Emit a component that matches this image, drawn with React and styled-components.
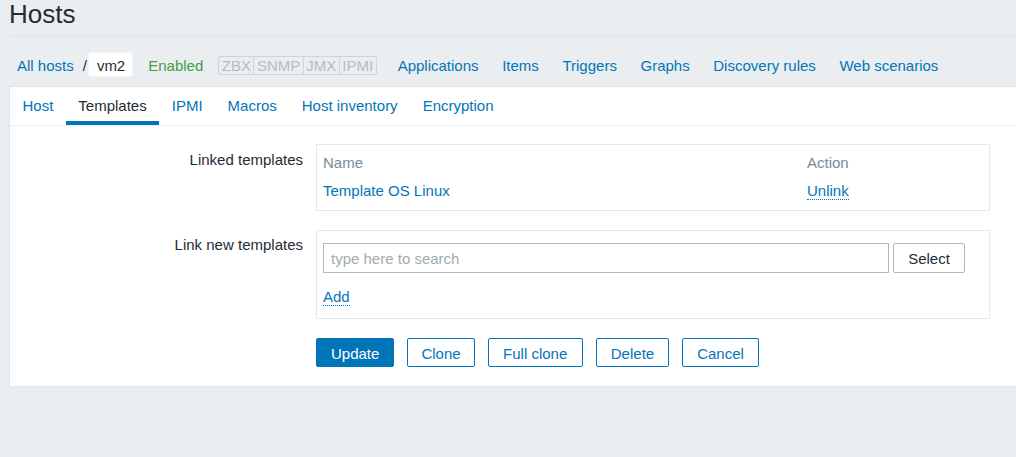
import React from "react";
import styled, { createGlobalStyle } from "styled-components";

const GlobalStyle = createGlobalStyle`
    html, body {
        margin: 0;
        padding: 0;
        background: #ebeef0;
        overflow: hidden;
    }
    body {
        font-family: "Liberation Sans", Arial, sans-serif;
        font-size: 15px;
        color: #1f2c33;
    }
`;

const Page = styled.div`
    width: 1030px;
    min-height: 457px;
`;

const Header = styled.header`
    margin-left: 9px;
    height: 36px;
    border-bottom: 1px solid #dfe4e7;
`;

const Title = styled.h1`
    margin: 0;
    font-size: 26px;
    font-weight: normal;
    line-height: 28px;
    color: #1f2c33;
`;

const NavRow = styled.nav`
    display: flex;
    align-items: center;
    height: 25px;
    padding: 15px 0 9px 17px;
    line-height: 25px;
`;

const NavLink = styled.a`
    color: #0275b8;
    text-decoration: none;
    white-space: nowrap;
    padding-top: 1px;
    margin-left: ${(p) => p.$ml || 0}px;
`;

const Slash = styled.span`
    margin: 0 1px 0 9px;
    padding-top: 1px;
    color: #1f2c33;
`;

const Current = styled.span`
    display: flex;
    align-items: center;
    height: 25px;
    box-sizing: border-box;
    padding: 1px 7px 0 8px;
    background: #fff;
    border: 1px solid #f3f5f6;
    border-radius: 2px;
`;

const Status = styled.span`
    color: #429e47;
    margin-left: 15px;
    padding-top: 1px;
`;

const Availability = styled.span`
    display: flex;
    margin-left: 15px;
    margin-top: 1px;
    height: 19px;
    box-sizing: border-box;
    border: 1px solid #ccd5d9;
    border-radius: 2px;
`;

const Interface = styled.span`
    display: flex;
    align-items: center;
    padding: 1px 2.5px 0;
    color: #b1bec5;
    line-height: 16px;
    & + & {
        border-left: 1px solid #ccd5d9;
    }
`;

const Panel = styled.section`
    margin-left: 9px;
    background: #fff;
    border: 1px solid #dfe4e7;
    padding-bottom: 19px;
`;

const Tabs = styled.ul`
    display: flex;
    list-style: none;
    margin: 0;
    padding: 0;
    height: 39px;
    box-sizing: border-box;
    border-bottom: 1px solid #ebeef0;
`;

const Tab = styled.li`
    display: flex;
    align-items: center;
    padding: 3px 12.5px 0;
    height: 38px;
    box-sizing: border-box;
    border-bottom: 4px solid ${(p) => (p.$active ? "#0275b8" : "transparent")};
    color: ${(p) => (p.$active ? "#1f2c33" : "#0275b8")};
    white-space: nowrap;
`;

const Form = styled.div`
    display: grid;
    grid-template-columns: 293px 674px;
    column-gap: 13px;
    row-gap: 19px;
    padding: 18px 0 0 0;
`;

const Label = styled.div`
    text-align: right;
    line-height: 20px;
    padding-top: ${(p) => p.$top || 6}px;
    white-space: nowrap;
`;

const Box = styled.div`
    border: 1px solid #e6e9eb;
    padding: ${(p) => p.$pad};
`;

const Table = styled.table`
    width: 100%;
    border-collapse: collapse;
    table-layout: fixed;
    & thead tr {
        height: 24px;
    }
    & tbody tr {
        height: 32px;
    }
    & th,
    & td {
        text-align: left;
        font-weight: normal;
        padding: 1px 0 0;
        vertical-align: middle;
    }
    & th {
        color: #768d99;
    }
`;

const LinkText = styled.a`
    color: #0275b8;
    text-decoration: none;
    border-bottom: ${(p) => (p.$dotted ? "1px dotted #0275b8" : "none")};
`;

const SearchRow = styled.div`
    display: flex;
    gap: 4px;
`;

const Input = styled.input`
    width: 566px;
    height: 30px;
    box-sizing: border-box;
    border: 1px solid #acbbc2;
    border-radius: 0;
    padding: 1px 7px 0;
    font-family: inherit;
    font-size: 15px;
    color: #1f2c33;
    &::placeholder {
        color: #a1acb2;
    }
`;

const SelectButton = styled.button`
    width: 72px;
    height: 30px;
    box-sizing: border-box;
    background: #fff;
    border: 1px solid #acbbc2;
    border-radius: 2px;
    font-family: inherit;
    font-size: 15px;
    color: #1f2c33;
    padding: 1px 0 0;
`;

const AddRow = styled.div`
    margin-top: 14px;
    line-height: 20px;
`;

const Buttons = styled.div`
    grid-column: 2;
    display: flex;
    gap: 13px;
`;

const Button = styled.button`
    height: 29px;
    box-sizing: border-box;
    padding: 1px ${(p) => p.$px || 13}px 0;
    border: 1px solid #0275b8;
    border-radius: 2px;
    background: ${(p) => (p.$primary ? "#0275b8" : "#fff")};
    color: ${(p) => (p.$primary ? "#fff" : "#0275b8")};
    font-family: inherit;
    font-size: 15px;
`;

const navItems = ["Applications", "Items", "Triggers", "Graphs", "Discovery rules", "Web scenarios"];
const tabs = ["Host", "Templates", "IPMI", "Macros", "Host inventory", "Encryption"];
const actions = [
    { label: "Update", primary: true, px: 14 },
    { label: "Clone", px: 13 },
    { label: "Full clone", px: 14.5 },
    { label: "Delete", px: 14 },
    { label: "Cancel", px: 14 }
];

const App = () => {
    return (
        <Page>
            <GlobalStyle />
            <Header>
                <Title>Hosts</Title>
            </Header>
            <NavRow>
                <NavLink>All hosts</NavLink>
                <Slash>/</Slash>
                <Current>vm2</Current>
                <Status>Enabled</Status>
                <Availability>
                    <Interface>ZBX</Interface>
                    <Interface>SNMP</Interface>
                    <Interface>JMX</Interface>
                    <Interface>IPMI</Interface>
                </Availability>
                {navItems.map((item, i) => (
                    <NavLink key={item} $ml={i === 0 ? 21 : 23.6}>
                        {item}
                    </NavLink>
                ))}
            </NavRow>
            <Panel>
                <Tabs>
                    {tabs.map((tab) => (
                        <Tab key={tab} $active={tab === "Templates"}>
                            {tab}
                        </Tab>
                    ))}
                </Tabs>
                <Form>
                    <Label>Linked templates</Label>
                    <Box $pad="5px 6px 4px">
                        <Table>
                            <colgroup>
                                <col style={{ width: 484 }} />
                                <col />
                            </colgroup>
                            <thead>
                                <tr>
                                    <th>Name</th>
                                    <th>Action</th>
                                </tr>
                            </thead>
                            <tbody>
                                <tr>
                                    <td>
                                        <LinkText>Template OS Linux</LinkText>
                                    </td>
                                    <td>
                                        <LinkText $dotted>Unlink</LinkText>
                                    </td>
                                </tr>
                            </tbody>
                        </Table>
                    </Box>
                    <Label $top={5}>Link new templates</Label>
                    <Box $pad="12px 6px 11px">
                        <SearchRow>
                            <Input placeholder="type here to search" />
                            <SelectButton>Select</SelectButton>
                        </SearchRow>
                        <AddRow>
                            <LinkText $dotted>Add</LinkText>
                        </AddRow>
                    </Box>
                    <Buttons>
                        {actions.map((a) => (
                            <Button key={a.label} $primary={a.primary} $px={a.px}>
                                {a.label}
                            </Button>
                        ))}
                    </Buttons>
                </Form>
            </Panel>
        </Page>
    );
};

export default App;
